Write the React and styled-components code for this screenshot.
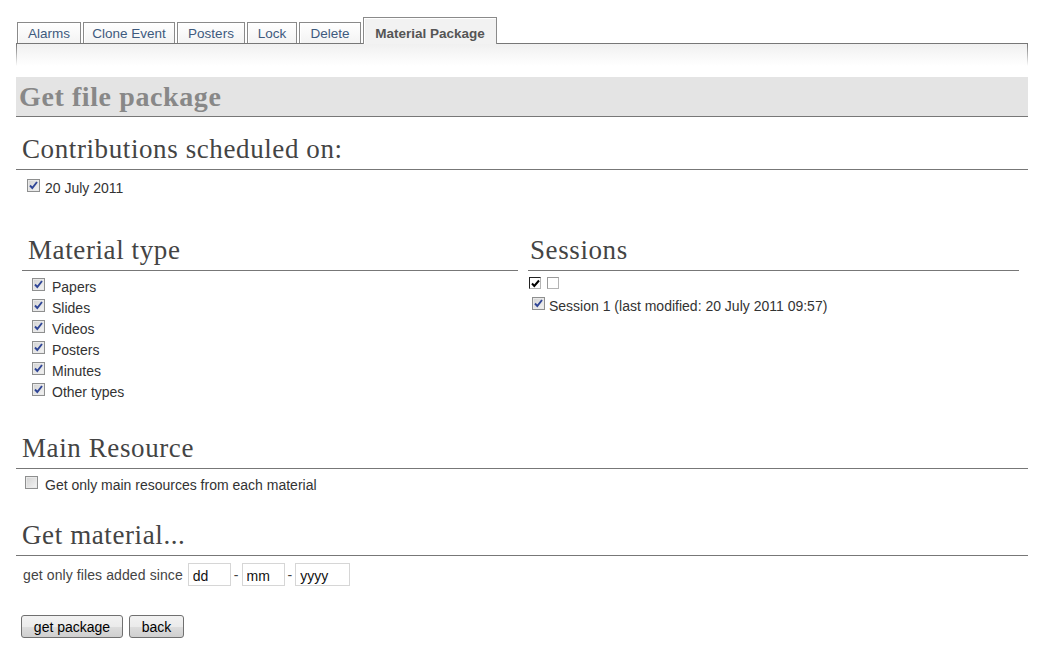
import React from 'react'
import styled, { createGlobalStyle } from 'styled-components'

const Global = createGlobalStyle`
  body {
    margin: 0;
    background: #fff;
    font-family: "Liberation Sans", Arial, sans-serif;
    font-size: 14px;
    color: #333;
  }
`

const Page = styled.div`
  padding: 17px 9px 20px 16px;
`

const TabBar = styled.div`
  display: flex;
  align-items: flex-end;
  gap: 2px;
  padding-left: 1px;
  height: 26px;
`

const Tab = styled.div`
  box-sizing: border-box;
  flex: none;
  width: ${p => p.w}px;
  height: ${p => (p.active ? '27px' : '21px')};
  margin-bottom: ${p => (p.active ? '-1px' : '0')};
  padding-top: ${p => (p.active ? '8px' : '3px')};
  text-align: center;
  border: 1px solid #8a8a8a;
  border-bottom: none;
  box-shadow: inset 1px 1px 0 #fff;
  background: ${p => (p.active ? '#f2f2f2' : 'linear-gradient(#ffffff, #f3f3f3)')};
  color: ${p => (p.active ? '#555' : '#3e5a7e')};
  font-weight: ${p => (p.active ? 'bold' : 'normal')};
  font-size: 13.5px;
  white-space: nowrap;
  position: relative;
  z-index: 1;
  line-height: 16px;
`

const TabBody = styled.div`
  height: 22px;
  border-top: 1px solid #777;
  background:
    linear-gradient(#777, rgba(255,255,255,0)) left top / 1px 100% no-repeat,
    linear-gradient(#777, rgba(255,255,255,0)) right top / 1px 100% no-repeat,
    linear-gradient(#f0f0f0, #ffffff);
`

const Banner = styled.h1`
  margin: 11px 0 0;
  height: 39px;
  background: #e4e4e4;
  border-bottom: 1px solid #777;
  font-family: "Liberation Serif", "Times New Roman", serif;
  font-size: 28px;
  font-weight: bold;
  color: #888;
  padding-left: 3px;
  line-height: 40px;
  letter-spacing: 0.6px;
`

const Section = styled.section`
  margin-top: ${p => p.top || 0}px;
`

const Heading = styled.h2`
  margin: 0;
  padding-left: ${p => p.indent || 6}px;
  padding-bottom: 6px;
  border-bottom: 1px solid #777;
  font-family: "Liberation Serif", "Times New Roman", serif;
  font-weight: normal;
  font-size: 27px;
  line-height: 28px;
  color: #444;
  letter-spacing: 0.6px;
`

const Columns = styled.div`
  display: grid;
  grid-template-columns: 496px 491px;
  column-gap: 10px;
  padding-left: 6px;
  margin-top: 38px;
`

const List = styled.div`
  display: flex;
  flex-direction: column;
  padding: ${p => p.pad || '5px 0 0 10px'};
`

const Row = styled.label`
  display: flex;
  align-items: center;
  gap: ${p => p.gap || 5}px;
  height: ${p => p.h || 21}px;
  line-height: 16px;
`

const Box = styled.span`
  box-sizing: border-box;
  width: 13px;
  height: 13px;
  flex: none;
  border: 1px solid #8e8f8f;
  background: linear-gradient(135deg, #d2d2d2, #f4f4f4);
  box-shadow: inset 0 0 0 1px #e9e9e9;
  display: inline-flex;
  align-items: center;
  justify-content: center;
  position: relative;
  top: -2px;
`

const SmallBox = styled.span`
  box-sizing: border-box;
  width: 12px;
  height: 12px;
  border: 1px solid #b4b4b4;
  border-top-color: ${p => (p.dark ? '#222' : '#999')};
  border-left-color: ${p => (p.dark ? '#222' : '#999')};
  background: #fff;
  display: inline-flex;
  align-items: center;
  justify-content: center;
`

const Toggles = styled.div`
  display: flex;
  gap: 6px;
  padding: 6px 0 0 1px;
  height: 14px;
`

const DateLine = styled.div`
  display: flex;
  align-items: center;
  gap: 3px;
  padding: 7px 0 0 7px;
  color: #444;
  letter-spacing: 0.1px;
`

const DateInput = styled.input`
  box-sizing: border-box;
  width: ${p => p.w}px;
  height: 23px;
  border: 1px solid #d6d6d6;
  font-family: "Liberation Sans", Arial, sans-serif;
  font-size: 14px;
  color: #111;
  padding: 2px 4px 0;
  margin-left: ${p => p.ml || 0}px;
  outline: none;
`

const Buttons = styled.div`
  display: flex;
  gap: 6px;
  padding: 29px 0 0 5px;
`

const Button = styled.button`
  box-sizing: border-box;
  height: 23px;
  width: ${p => p.w}px;
  padding: 0;
  border: 1px solid #707070;
  border-radius: 3px;
  background: linear-gradient(#f2f2f2 0%, #ebebeb 50%, #dddddd 51%, #cfcfcf 100%);
  font-family: "Liberation Sans", Arial, sans-serif;
  font-size: 14px;
  color: #000;
`

function Checkbox({ checked }) {
  return (
    <Box>
      {checked && (
        <svg width="9" height="9" viewBox="0 0 9 9">
          <path d="M1 4.5 L3.3 7 L8 1" fill="none" stroke="#2f4596" strokeWidth="1.9" />
        </svg>
      )}
    </Box>
  )
}

const tabs = [
  { label: 'Alarms', w: 64 },
  { label: 'Clone Event', w: 92 },
  { label: 'Posters', w: 68 },
  { label: 'Lock', w: 50 },
  { label: 'Delete', w: 62 },
  { label: 'Material Package', w: 134, active: true },
]
const types = ['Papers', 'Slides', 'Videos', 'Posters', 'Minutes', 'Other types']

export default function App() {
  return (
    <Page>
      <Global />
      <TabBar>
        {tabs.map(t => (
          <Tab key={t.label} w={t.w} active={t.active}>{t.label}</Tab>
        ))}
      </TabBar>
      <TabBody />
      <Banner>Get file package</Banner>

      <Section top={18}>
        <Heading>Contributions scheduled on:</Heading>
        <List pad="7px 0 0 11px">
          <Row gap={5}><Checkbox checked /> 20 July 2011</Row>
        </List>
      </Section>

      <Columns>
        <div>
          <Heading>Material type</Heading>
          <List>
            {types.map(t => (
              <Row key={t} gap={7}><Checkbox checked />{' '}{t}</Row>
            ))}
          </List>
        </div>
        <div>
          <Heading indent={2}>Sessions</Heading>
          <Toggles>
            <SmallBox dark>
              <svg width="9" height="9" viewBox="0 0 9 9">
                <path d="M1 4.5 L3.3 7 L8 1.5" fill="none" stroke="#000" strokeWidth="2" />
              </svg>
            </SmallBox>
            <SmallBox />
          </Toggles>
          <List pad="4px 0 0 4px">
            <Row gap={4}><Checkbox checked /> Session 1 (last modified: 20 July 2011 09:57)</Row>
          </List>
        </div>
      </Columns>

      <Section top={32}>
        <Heading>Main Resource</Heading>
        <List pad="5px 0 0 9px">
          <Row gap={7}><Checkbox /> Get only main resources from each material</Row>
        </List>
      </Section>

      <Section top={26}>
        <Heading>Get material...</Heading>
        <DateLine>
          get only files added since
          <DateInput w={43} ml={2} defaultValue="dd" />
          -
          <DateInput w={43} defaultValue="mm" />
          -
          <DateInput w={55} defaultValue="yyyy" />
        </DateLine>
      </Section>

      <Buttons>
        <Button w={102}>get package</Button>
        <Button w={55}>back</Button>
      </Buttons>
    </Page>
  )
}
